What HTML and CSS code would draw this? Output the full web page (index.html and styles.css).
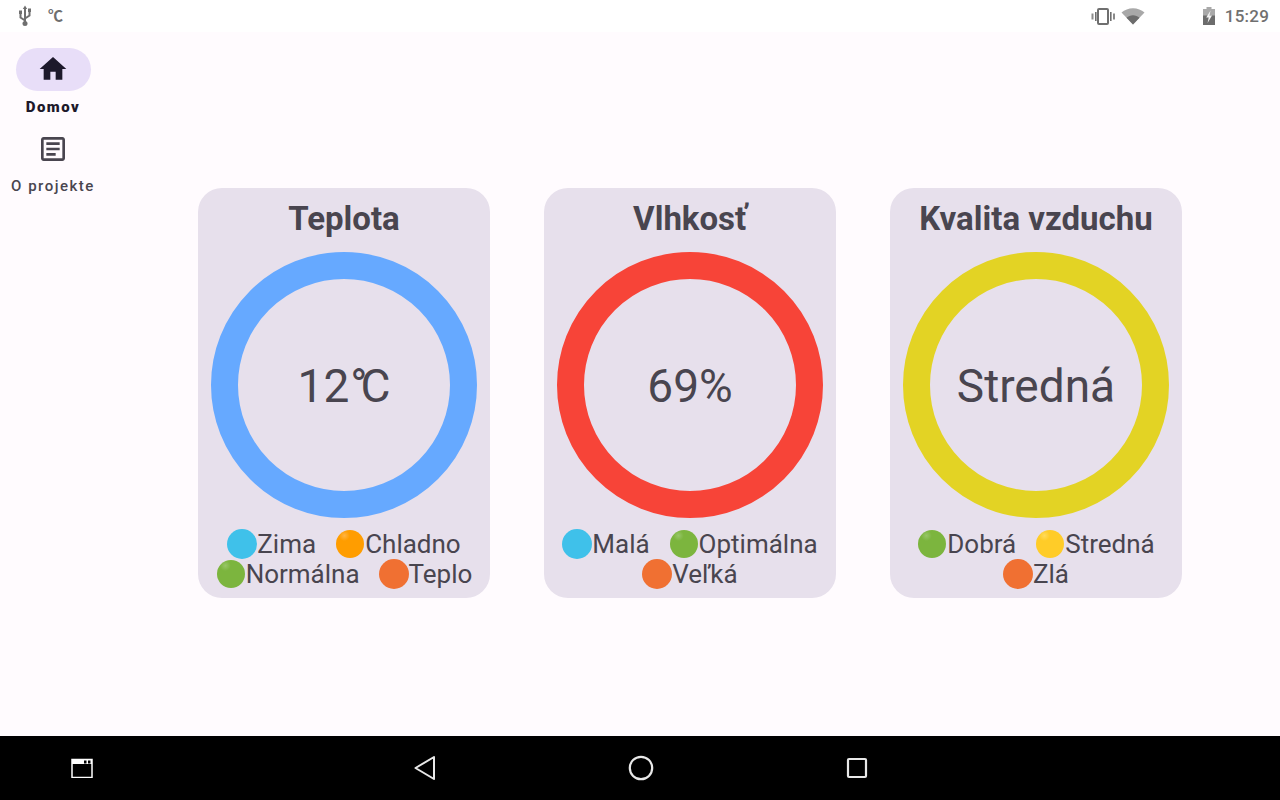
FILE: index.html
```html
<!DOCTYPE html>
<html lang="sk">
<head>
<meta charset="utf-8">
<title>Domov</title>
<link rel="stylesheet" href="styles.css">
</head>
<body>
<div class="screen">
  <header class="status">
    <div class="status-group left">
      <svg class="ic-usb" width="16" height="22" viewBox="0 0 16 22"><g fill="none" stroke="#6f6f6f" stroke-width="2"><path d="M8 3v16M8 15.500 3.500 12.500V9M8 13.500l4.500-3V7"/></g><path d="M8 .5 5.800 4h4.400zM2 5.500h3V9H2zM11 3.500h3V7h-3z" fill="#6f6f6f"/><circle cx="8" cy="18.500" r="2.500" fill="#6f6f6f"/></svg>
      <span class="status-deg">℃</span>
    </div>
    <div class="status-group right">
      <svg class="ic-vib" width="24" height="18" viewBox="0 0 24 18"><rect x="7" y="2" width="10" height="15" rx="1" fill="none" stroke="#6f6f6f" stroke-width="2"/><path d="M4 5h1.600v9H4zM19 5h1.600v9H19z" fill="#6f6f6f"/><path d="M.5 6.500h2v6h-2zM22 6.500h2v6h-2z" fill="#8a8a8a"/></svg>
      <svg class="ic-wifi" width="24" height="18" viewBox="0 0 24 18"><path d="M.5 5.500C3.600 2.800 7.500 1.200 12 1.200s8.400 1.600 11.500 4.300L12 17.500z" fill="#a8a8a8"/><path d="M5.500 10.700C7.300 9.200 9.500 8.300 12 8.300s4.700.9 6.500 2.400L12 17.500z" fill="#6c6c6c"/></svg>
      <svg class="ic-bat" width="14" height="20" viewBox="0 0 14 20"><path d="M4.500 1h5v2H13v16H1V3h3.500z" fill="#a9a9a9"/><path d="M1 9.500h12V19H1z" fill="#6c6c6c"/><path d="M8.600 4.500 4.200 11.500h2.500L5.600 17l4.400-7.500H7.400z" fill="#f2f2f2"/></svg>
      <span class="clock">15:29</span>
    </div>
  </header>

  <div class="body">
    <nav class="rail">
      <div class="rail-item active">
        <div class="pill">
          <svg width="32" height="32" viewBox="0 0 24 24"><path d="M10 20v-6h4v6h5v-8h3L12 3 2 12h3v8z" fill="#1d192b"/></svg>
        </div>
        <span class="rail-label">Domov</span>
      </div>
      <div class="rail-item">
        <div class="pill plain">
          <svg width="32" height="32" viewBox="0 0 24 24"><path d="M19 5v14H5V5h14m0-2H5c-1.100 0-2 .9-2 2v14c0 1.100.9 2 2 2h14c1.100 0 2-.9 2-2V5c0-1.100-.9-2-2-2zM7 7h10v2H7zm0 4h10v2H7zm0 4h7v2H7z" fill="#49454f"/></svg>
        </div>
        <span class="rail-label">O projekte</span>
      </div>
    </nav>

    <main class="cards">
      <section class="card">
        <h2 class="card-title">Teplota</h2>
        <div class="gauge gauge-blue"><span class="gauge-value">12<span class="deg">°</span>C</span></div>
        <ul class="legend">
          <li class="legend-item"><i class="dot big blue"></i>Zima</li>
          <li class="legend-item"><i class="dot orange"></i>Chladno</li>
          <li class="legend-item"><i class="dot green"></i>Normálna</li>
          <li class="legend-item"><i class="dot big red"></i>Teplo</li>
        </ul>
      </section>
      <section class="card">
        <h2 class="card-title">Vlhkosť</h2>
        <div class="gauge gauge-red"><span class="gauge-value">69%</span></div>
        <ul class="legend">
          <li class="legend-item"><i class="dot big blue"></i>Malá</li>
          <li class="legend-item"><i class="dot green"></i>Optimálna</li>
          <li class="legend-item"><i class="dot big red"></i>Veľká</li>
        </ul>
      </section>
      <section class="card">
        <h2 class="card-title">Kvalita vzduchu</h2>
        <div class="gauge gauge-yellow"><span class="gauge-value">Stredná</span></div>
        <ul class="legend">
          <li class="legend-item"><i class="dot green"></i>Dobrá</li>
          <li class="legend-item"><i class="dot yellow"></i>Stredná</li>
          <li class="legend-item"><i class="dot big red"></i>Zlá</li>
        </ul>
      </section>
    </main>
  </div>

  <footer class="navbar">
    <svg class="nav-recents" width="22" height="20" viewBox="0 0 22 20"><rect x="1" y="1.500" width="20" height="18" fill="none" stroke="#fff" stroke-width="1.500"/><path d="M1 1h20v5H1z" fill="#fff"/><path d="M13 2.500h2.500v3H13zM17 2.500h2.500v3H17z" fill="#000"/></svg>
    <svg class="nav-back" width="24" height="26" viewBox="0 0 24 26"><path d="M21 2 2.500 13 21 24z" fill="none" stroke="#e8e8e8" stroke-width="2" stroke-linejoin="round"/></svg>
    <svg class="nav-home" width="26" height="26" viewBox="0 0 26 26"><circle cx="13" cy="13" r="11.200" fill="none" stroke="#e8e8e8" stroke-width="2.200"/></svg>
    <svg class="nav-square" width="22" height="22" viewBox="0 0 22 22"><rect x="2" y="2" width="18" height="18" rx="1" fill="none" stroke="#e8e8e8" stroke-width="2.200"/></svg>
  </footer>
</div>
</body>
</html>
```
FILE: styles.css
```css
* { box-sizing: border-box; }
html, body { margin: 0; padding: 0; }
body { font-family: Roboto, "Noto Sans CJK SC", sans-serif; }

.screen {
  width: 1280px;
  height: 800px;
  display: flex;
  flex-direction: column;
  background: #fffbfe;
  overflow: hidden;
}

/* status bar */
.status {
  height: 32px;
  background: #fff;
  display: flex;
  justify-content: space-between;
  align-items: center;
  padding: 0 11px 0 17px;
  color: #6f6f6f;
}
.status-group { display: flex; align-items: center; }
.left { gap: 15px; }
.status-deg { font-size: 15px; font-weight: 700; line-height: 20px; }
.right { gap: 0; }
.ic-vib { margin-right: 6px; }
.ic-bat { margin-left: 57px; }
.clock { margin-left: 9px; font-size: 17px; font-weight: 500; letter-spacing: .2px; color: #707070; }

/* main area */
.body { flex: 1; display: flex; min-height: 0; }

.rail {
  width: 106px;
  flex: none;
  display: flex;
  flex-direction: column;
  align-items: center;
  padding-top: 16px;
  gap: 10px;
}
.rail-item { display: flex; flex-direction: column; align-items: center; gap: 6px; }
.pill {
  width: 75px;
  height: 43px;
  border-radius: 22px;
  background: #e8def8;
  padding-bottom: 1px;
  display: flex;
  align-items: center;
  justify-content: center;
}
.pill.plain { background: none; padding-bottom: 0; }
.rail-label {
  font-size: 15px;
  line-height: 20px;
  font-weight: 500;
  letter-spacing: 1.5px;
  color: #49454f;
  white-space: nowrap;
}
.active .rail-label { font-weight: 900; color: #1d192b; }

.cards {
  flex: 1;
  display: flex;
  justify-content: center;
  gap: 54px;
  padding: 156px 6px 0 0;
}
.card {
  width: 292px;
  height: 410px;
  background: #e7e0ec;
  border-radius: 24px;
  padding: 12px 0 0;
  display: flex;
  flex-direction: column;
  align-items: center;
  color: #49454f;
}
.card-title {
  margin: 0;
  font-size: 33px;
  line-height: 38px;
  font-weight: 700;
  white-space: nowrap;
}
.gauge {
  width: 266px;
  height: 266px;
  margin-top: 14px;
  border-radius: 50%;
  border: 27px solid;
  display: flex;
  align-items: center;
  justify-content: center;
}
.gauge-blue { border-color: #66a9ff; }
.gauge-red { border-color: #f74438; }
.gauge-yellow { border-color: #e3d324; }
.gauge-value { font-size: 46px; line-height: 56px; padding-top: 2px; white-space: nowrap; }
.deg { letter-spacing: -7px; margin-left: 1px; }

.legend {
  list-style: none;
  margin: 11px 0 0;
  padding: 0;
  width: 292px;
  display: flex;
  flex-wrap: wrap;
  justify-content: center;
  column-gap: 19px;
}
.legend-item {
  display: flex;
  align-items: center;
  height: 30px;
  font-size: 26px;
  line-height: 30px;
  white-space: nowrap;
}
.dot {
  display: block;
  width: 28px;
  height: 28px;
  border-radius: 50%;
  margin: 0 1px;
}
.dot.big { width: 30px; height: 30px; margin: 0; }
.blue { background: #3fc1ea; }
.red { background: #f07032; }
.orange { background: radial-gradient(circle at 30% 20%, #ffb444 0, #ff9d00 18%, #ff9d00 78%, #ee8a00 100%); }
.green { background: radial-gradient(circle at 30% 20%, #98c668 0, #7cb53e 18%, #7cb53e 78%, #68a232 100%); }
.yellow { background: radial-gradient(circle at 30% 20%, #ffdb5c 0, #ffcc28 18%, #ffcc28 78%, #f4b000 100%); }

/* nav bar */
.navbar {
  height: 64px;
  background: #000;
  flex: none;
  display: flex;
  align-items: center;
  padding-left: 71px;
}
.nav-back { margin-left: 320px; }
.nav-home { margin-left: 191px; }
.nav-square { margin-left: 192px; }
```
